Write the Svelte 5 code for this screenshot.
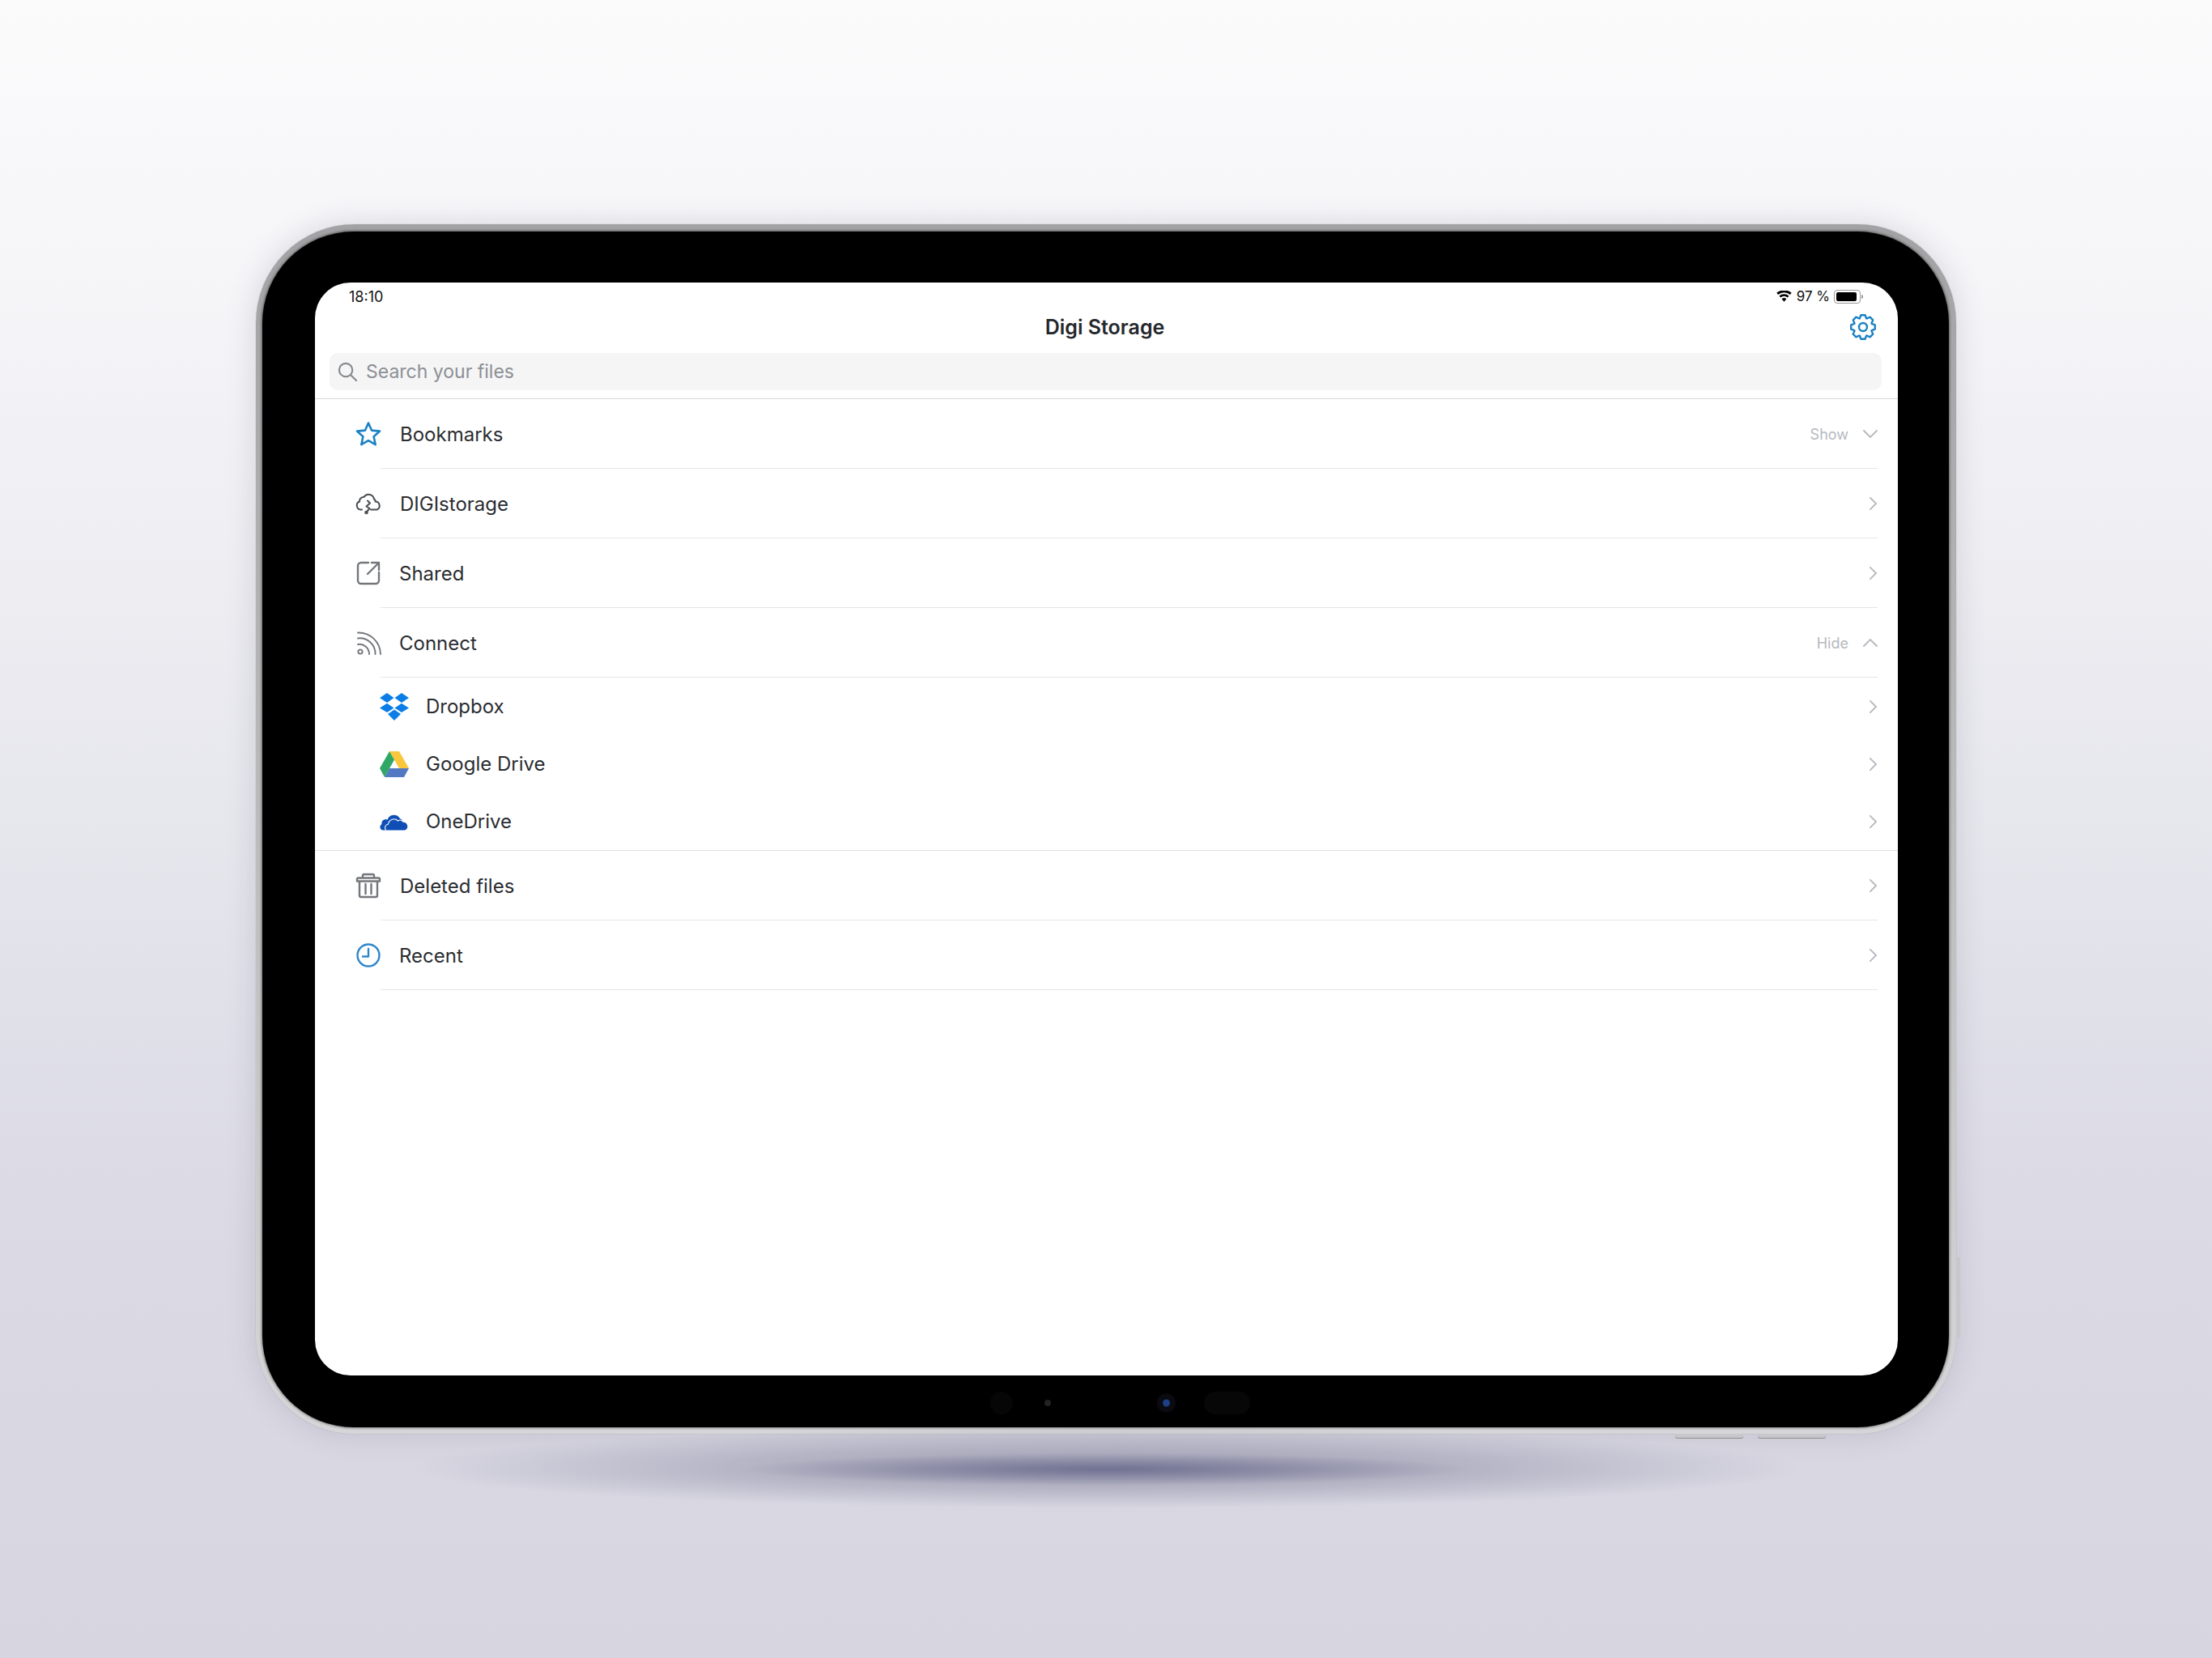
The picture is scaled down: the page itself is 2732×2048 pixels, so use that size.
<script>
	const rowsTop = [
		{ id: "star", label: "Bookmarks", action: "Show", chevron: "down" },
		{ id: "cloud", label: "DIGIstorage", chevron: "right" },
		{ id: "share", label: "Shared", chevron: "right", tight: true },
		{ id: "rss", label: "Connect", action: "Hide", chevron: "up", tight: true }
	];
	const services = [
		{ id: "dropbox", label: "Dropbox" },
		{ id: "drive", label: "Google Drive" },
		{ id: "onedrive", label: "OneDrive" }
	];
	const rowsBottom = [
		{ id: "trash", label: "Deleted files", chevron: "right" },
		{ id: "clock", label: "Recent", chevron: "right", tight: true }
	];

	// 8 tooth gear outline
	function gearPath(cx, cy, outer, inner) {
		const pts = [];
		for (let i = 0; i < 8; i++) {
			const a = (i * Math.PI) / 4 - Math.PI / 2;
			const s = Math.PI / 4;
			for (const [off, r] of [[-0.36, inner], [-0.17, outer], [0.17, outer], [0.36, inner]]) {
				pts.push((cx + r * Math.cos(a + off * s * 1.3)).toFixed(2) + "," + (cy + r * Math.sin(a + off * s * 1.3)).toFixed(2));
			}
		}
		return pts.join(" ");
	}
	const gear = gearPath(17, 17, 15, 11.5);
</script>

{#snippet chevronIcon(dir)}
	{#if dir === "right"}
		<svg class="chev-right" viewBox="0 0 12 20"><path d="M2 2l8 8-8 8" /></svg>
	{:else if dir === "down"}
		<svg class="chev-wide" viewBox="0 0 18 12"><path d="M1 2l8 8 8-8" /></svg>
	{:else}
		<svg class="chev-wide" viewBox="0 0 18 12"><path d="M1 10l8-8 8 8" /></svg>
	{/if}
{/snippet}

{#snippet icon(id)}
	{#if id === "star"}
		<svg class="icon blue" viewBox="0 0 32 32"><polygon points="16,2.500 20,11.600 30,12.600 22.600,19.300 24.700,29.200 16,24.200 7.300,29.200 9.400,19.300 2,12.600 12,11.600" /></svg>
	{:else if id === "cloud"}
		<svg class="icon dark" viewBox="0 0 32 32"><path d="M8 23.500H6.500a5.200 5.200 0 0 1-1.500-10A5 5 0 0 1 10.500 8a6.800 6.800 0 0 1 12.500 2.500 2.800 2.800 0 0 1 1.500 3A5.200 5.200 0 0 1 26.500 23.500H19M15 12.500l3 3-4.500 4 4 2.500-3 3.500" /><circle cx="13.500" cy="27" r="1.300" /></svg>
	{:else if id === "share"}
		<svg class="icon grey" viewBox="0 0 32 32"><path d="M16 3H7a4 4 0 0 0-4 4v18a4 4 0 0 0 4 4h18a4 4 0 0 0 4-4V15M15 17L29 3M20 3h9v9" /></svg>
	{:else if id === "rss"}
		<svg class="icon grey thin" viewBox="0 0 32 32"><circle cx="6" cy="27" r="2.600" /><path d="M3 18a12 12 0 0 1 14 12M3 10.500a19 19 0 0 1 21.500 19.500M3 3.500a27 27 0 0 1 28 26.500" /></svg>
	{:else if id === "trash"}
		<svg class="icon grey" viewBox="0 0 32 32"><path d="M2 10.500V8a1.500 1.500 0 0 1 1.500-1.500h25A1.500 1.500 0 0 1 30 8v2.500zM9 6.500V3.500A1.500 1.500 0 0 1 10.500 2h11A1.500 1.500 0 0 1 23 3.500v3M5 10.500V28a2 2 0 0 0 2 2h18a2 2 0 0 0 2-2V10.500M12.500 14v12M19.500 14v12" /></svg>
	{:else if id === "clock"}
		<svg class="icon clock" viewBox="0 0 32 32"><circle cx="16" cy="16" r="13.500" /><path d="M16 8v9.500H9" /></svg>
	{:else if id === "dropbox"}
		<svg class="brand" viewBox="-2 -1 40 36"><g fill="#0a7de6"><polygon points="9,0 17.500,6 9,12 0,6" /><polygon points="27,0 36,6 27,12 18.500,6" /><polygon points="0,18.500 9,12.800 17.500,18.500 9,24" /><polygon points="27,12.800 36,18.500 27,24 18.500,18.500" /><polygon points="18,20.500 26,26 18,34 10,26" /></g></svg>
	{:else if id === "drive"}
		<svg class="brand" viewBox="-2 -2 40 36"><polygon fill="#fac73c" points="12,0 24,0 36,21 24,21" /><polygon fill="#2fa866" points="12,0 18,10.500 6,32 0,21" /><polygon fill="#5379c2" points="12,21 36,21 30,32 6,32" /></svg>
	{:else if id === "onedrive"}
		<svg class="brand" viewBox="-2 -7.500 40 36">
			<path fill="#0f4fb5" d="M4 21A4 4 0 0 1 2.500 13.500 5 5 0 0 1 9.500 8 8.500 8.500 0 0 1 25 6.500 7 7 0 0 1 29 11 5.200 5.200 0 0 1 31 21Z" />
			<path fill="none" stroke="#fff" stroke-width="1.100" d="M7.500 21C5.500 17.500 7 14 10.500 13.500 11.500 8 18 5 22.500 9.500 25 7.500 28 9 29 11" />
		</svg>
	{/if}
{/snippet}

{#snippet row(item)}
	<div class="row">
		{@render icon(item.id)}
		<span class="label" class:tight={item.tight}>{item.label}</span>
		{#if item.action}<span class="action">{item.action}</span>{/if}
		{@render chevronIcon(item.chevron)}
	</div>
{/snippet}

<div class="page">
	<div class="device">
		<span class="side-button"></span>
		<span class="bottom-button one"></span>
		<span class="bottom-button two"></span>
		<div class="bezel">
			<div class="screen">
				<div class="status">
					<span>18:10</span>
					<div class="status-right">
						<svg class="wifi" viewBox="0 0 20 14">
							<path d="M10 14l-3.100-3.700a4.800 4.800 0 0 1 6.200 0zM5.500 8.700L3.600 6.500a9.800 9.800 0 0 1 12.800 0l-1.900 2.200a7 7 0 0 0-9 0zM2.200 4.800L.3 2.600a15 15 0 0 1 19.400 0l-1.900 2.200a12.200 12.200 0 0 0-15.600 0z" />
						</svg>
						<span>97 %</span>
						<div class="battery"><div class="battery-fill"></div></div>
					</div>
				</div>

				<div class="nav">
					<span></span>
					<span class="title">Digi Storage</span>
					<svg class="gear" viewBox="0 0 34 34">
						<polygon points={gear} />
						<circle cx="17" cy="17" r="5" />
					</svg>
				</div>

				<div class="search">
					<svg class="search-icon" viewBox="0 0 26 26"><circle cx="10.500" cy="10.500" r="8.500" /><path d="M16.800 16.800L24 24" /></svg>
					<span>Search your files</span>
				</div>

				<div class="list">
					{#each rowsTop as item}
						{@render row(item)}
					{/each}
					<div class="services">
						{#each services as item}
							<div class="service">
								{@render icon(item.id)}
								<span class="label">{item.label}</span>
								{@render chevronIcon("right")}
							</div>
						{/each}
					</div>
					{#each rowsBottom as item}
						{@render row(item)}
					{/each}
				</div>
			</div>
			<div class="sensors">
				<span class="sensor-round"></span>
				<span class="sensor-dot"></span>
				<span class="camera"></span>
				<span class="sensor-pill"></span>
			</div>
		</div>
		<div class="floor-shadow"></div>
		<div class="floor-core"></div>
	</div>
</div>

<style>
	:global(body) {
		margin: 0;
	}

	.page {
		box-sizing: border-box;
		height: 2048px;
		overflow: hidden;
		padding-top: 277px;
		display: flex;
		justify-content: center;
		background: linear-gradient(180deg, #fbfbfc 0%, #f5f5f8 18%, #e6e6ed 50%, #dad9e4 75%, #d6d5e0 100%);
		font-family: Inter, "Liberation Sans", sans-serif;
	}

	.device {
		position: relative;
		box-sizing: border-box;
		width: 2100px;
		height: 1494px;
		padding: 9px 9px 8px 8px;
		border-radius: 122px;
		background: linear-gradient(180deg, #a2a2a4 0%, #bcbcbe 50%, #d6d6d8 100%);
		box-shadow: 0 0 1px rgba(120, 120, 125, 0.7), 0 0 36px rgba(90, 90, 110, 0.2);
	}

	.side-button {
		position: absolute;
		right: -5px;
		top: 1276px;
		width: 5px;
		height: 100px;
		background: #c8c8cc;
		border-radius: 0 2px 2px 0;
	}

	.bottom-button {
		position: absolute;
		bottom: -5px;
		width: 84px;
		height: 5px;
		background: #c8c8cc;
		border-radius: 0 0 3px 3px;
		box-shadow: 0 1px 0 #8e8e92;
	}

	.bottom-button.one {
		left: 1753px;
	}

	.bottom-button.two {
		left: 1855px;
	}

	.bezel {
		position: relative;
		box-sizing: border-box;
		height: 100%;
		padding: 63px 63px 64px 65px;
		background: #000;
		border-radius: 113px;
		box-shadow: 0 0 3px 1px rgba(0, 0, 0, 0.45);
		z-index: 1;
	}

	.screen {
		height: 100%;
		background: #fff;
		border-radius: 44px;
		overflow: hidden;
		color: #2a2d31;
	}

	.status {
		height: 34px;
		box-sizing: border-box;
		padding: 0 44px 0 42px;
		display: flex;
		align-items: center;
		justify-content: space-between;
		font-size: 18px;
		color: #111;
	}

	.status-right {
		display: flex;
		align-items: center;
		gap: 6px;
		font-size: 17px;
	}

	.wifi {
		width: 19px;
		height: 14px;
		fill: #000;
	}

	.battery {
		position: relative;
		box-sizing: border-box;
		width: 33px;
		height: 17px;
		padding: 2px;
		border: 1px solid #999;
		border-radius: 4px;
		margin-right: 2px;
		margin-left: -1px;
	}

	.battery::after {
		content: "";
		position: absolute;
		right: -4px;
		top: 5px;
		width: 2px;
		height: 5px;
		background: #999;
		border-radius: 0 2px 2px 0;
	}

	.battery-fill {
		height: 100%;
		width: 94%;
		background: #000;
		border-radius: 2px;
	}

	.nav {
		height: 42px;
		display: grid;
		grid-template-columns: 1fr auto 1fr;
		align-items: center;
		padding: 0 26px 0 22px;
	}

	.title {
		font-size: 25px;
		font-weight: 600;
		color: #25282c;
	}

	.gear {
		justify-self: end;
		width: 34px;
		height: 34px;
		fill: none;
		stroke: #1a82c4;
		stroke-width: 2.4;
		stroke-linejoin: round;
	}

	.search {
		height: 46px;
		margin: 11px 20px 10px 18px;
		padding: 0 10px;
		display: flex;
		align-items: center;
		gap: 10px;
		border-radius: 10px;
		background: #f5f5f6;
		font-size: 23px;
		color: #8c8f94;
	}

	.search-icon {
		width: 25px;
		height: 25px;
		fill: none;
		stroke: #85888d;
		stroke-width: 2.2;
		stroke-linecap: round;
	}

	.list {
		border-top: 1px solid #d9d9dc;
	}

	.row,
	.service {
		display: flex;
		align-items: center;
		box-sizing: border-box;
		font-size: 24px;
	}

	.row {
		position: relative;
		height: 86px;
		padding: 0 25px 0 50px;
	}

	.row::after {
		content: "";
		position: absolute;
		left: 81px;
		right: 25px;
		bottom: 0;
		height: 1px;
		background: #e6e6e8;
	}

	.service {
		height: 71px;
		padding: 0 25px 0 78px;
	}

	.services {
		border-bottom: 1px solid #dfdfe2;
	}

	.label {
		flex: 1;
		margin-left: 23px;
	}

	.label.tight {
		margin-left: 22px;
	}

	.service .label {
		margin-left: 19px;
	}

	.action {
		margin-right: 18px;
		font-size: 18px;
		color: #b5b8be;
	}

	.icon {
		flex: none;
		width: 32px;
		height: 32px;
		fill: none;
		stroke-width: 2.2;
		stroke-linejoin: round;
		stroke-linecap: round;
	}

	.icon.blue {
		stroke: #1a82c4;
		stroke-width: 2.6;
	}

	.icon.dark {
		stroke: #4a4d52;
		stroke-width: 2;
	}

	.icon.grey {
		stroke: #73767b;
		stroke-width: 2.4;
	}

	.icon.thin {
		stroke-width: 1.9;
	}

	.icon.clock {
		stroke: #2f86c9;
		stroke-width: 2.4;
	}

	.brand {
		flex: none;
		width: 40px;
		height: 36px;
	}

	.chev-right {
		flex: none;
		width: 11px;
		height: 18px;
		margin-right: 0;
		fill: none;
		stroke: #b5b8bd;
		stroke-width: 2;
		stroke-linecap: round;
	}

	.chev-wide {
		flex: none;
		width: 18px;
		height: 12px;
		fill: none;
		stroke: #b5b8bd;
		stroke-width: 1.9;
		stroke-linecap: round;
	}

	.sensors {
		position: absolute;
		left: 0;
		right: 0;
		bottom: 16px;
		height: 28px;
	}

	.sensors span {
		position: absolute;
		top: 50%;
		transform: translateY(-50%);
	}

	.sensor-round {
		left: 899px;
		width: 28px;
		height: 28px;
		border-radius: 50%;
		background: #060606;
	}

	.sensor-dot {
		left: 966px;
		width: 8px;
		height: 8px;
		border-radius: 50%;
		background: #222224;
	}

	.camera {
		left: 1112px;
		width: 9px;
		height: 9px;
		border-radius: 50%;
		background: #1c3f86;
		box-shadow: 0 0 0 7px #0a0a10;
	}

	.sensor-pill {
		left: 1163px;
		width: 57px;
		height: 28px;
		border-radius: 14px;
		background: #070707;
	}

	.floor-shadow {
		position: absolute;
		left: 190px;
		right: 190px;
		top: 100%;
		height: 100px;
		margin-top: -8px;
		border-radius: 50%;
		background: radial-gradient(closest-side, rgba(105, 105, 135, 0.55), rgba(130, 130, 155, 0.38) 55%, rgba(170, 170, 190, 0) 100%);
	}

	.floor-core {
		position: absolute;
		left: 600px;
		right: 600px;
		top: 100%;
		height: 40px;
		margin-top: 24px;
		border-radius: 50%;
		background: radial-gradient(closest-side, rgba(90, 92, 130, 0.65), rgba(90, 92, 130, 0) 100%);
	}
</style>
